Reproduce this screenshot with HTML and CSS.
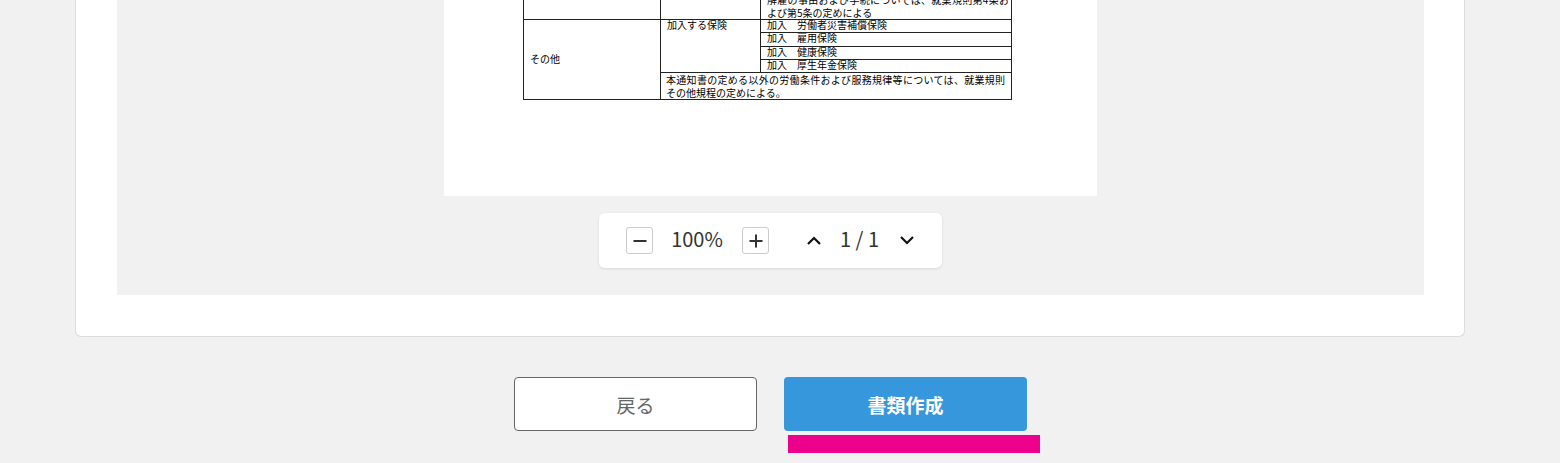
FILE: index.html
```html
<!DOCTYPE html>
<html lang="ja">
<head>
<meta charset="utf-8">
<title>書類作成</title>
<link rel="stylesheet" href="styles.css">
</head>
<body>
<main class="card">
  <section class="viewer">
    <div class="pdf-page">
      <table class="doc">
        <colgroup><col class="c1"><col class="c2"><col class="c3"></colgroup>
        <tr class="r-top">
          <td></td>
          <td class="tl">5 　解雇の事由</td>
          <td class="tl"><span class="spread">解雇の事由および手続については、就業規則第4条お</span><br>よび第5条の定めによる</td>
        </tr>
        <tr class="r-s">
          <td rowspan="5" class="other">その他</td>
          <td rowspan="4" class="tl">加入する保険</td>
          <td>加入　労働者災害補償保険</td>
        </tr>
        <tr class="r-s r-tall"><td>加入　雇用保険</td></tr>
        <tr class="r-s"><td>加入　健康保険</td></tr>
        <tr class="r-s"><td>加入　厚生年金保険</td></tr>
        <tr class="r-b"><td colspan="2"><span class="spread">本通知書の定める以外の労働条件および服務規律等については、就業規則</span><br>その他規程の定めによる。</td></tr>
      </table>
    </div>
    <div class="toolbar">
      <button class="zoom-btn" aria-label="縮小"><svg width="14" height="14" viewBox="0 0 14 14"><path d="M0.5 7H13.5" class="ico"/></svg></button>
      <span class="pct">100%</span>
      <button class="zoom-btn" aria-label="拡大"><svg width="14" height="14" viewBox="0 0 14 14"><path d="M0.5 7H13.5M7 0.5V13.5" class="ico"/></svg></button>
      <button class="nav up" aria-label="前へ"><svg width="14" height="9" viewBox="0 0 14 9"><path d="M1 8L7 2L13 8" class="chev"/></svg></button>
      <span class="pages">1 / 1</span>
      <button class="nav down" aria-label="次へ"><svg width="14" height="9" viewBox="0 0 14 9"><path d="M1 1L7 7L13 1" class="chev"/></svg></button>
    </div>
  </section>
</main>
<div class="actions">
  <button class="btn back">戻る</button>
  <div class="primary-wrap">
    <button class="btn primary">書類作成</button>
    <div class="mark"></div>
  </div>
</div>
</body>
</html>
```
FILE: styles.css
```css
* { box-sizing: border-box; }
html, body { margin: 0; height: 463px; overflow: hidden; }
body {
  background: #f1f1f1;
  font-family: "Noto Sans CJK JP", "Noto Sans", sans-serif;
  color: #333;
}
.card {
  width: 1390px;
  height: 337px;
  margin-left: 75px;
  padding: 0 40px 41px 41px;
  background: #fff;
  border: 1px solid #ddd;
  border-top: 0;
  border-radius: 0 0 6px 6px;
}
.viewer {
  height: 295px;
  background: #f1f1f1;
  display: flex;
  flex-direction: column;
  align-items: center;
}
.pdf-page {
  width: 653px;
  height: 196px;
  background: #fff;
  overflow: hidden;
  display: flex;
  flex-direction: column;
  justify-content: flex-end;
  align-items: center;
  padding-bottom: 96px;
  flex: none;
}
.doc {
  flex: none;
  width: 489px;
  margin-left: -6px;
  table-layout: fixed;
  border-collapse: collapse;
  font-family: "Noto Sans CJK JP", sans-serif;
  font-size: 10px;
  line-height: 13px;
  color: #000;
}
.c1 { width: 137px; }
.c2 { width: 100px; }
.doc td {
  border: 1px solid #222;
  padding: 0 5px 0 6px;
  vertical-align: top;
  white-space: nowrap;
}
.doc td[colspan] { padding-left: 5px; }
.doc .spread { letter-spacing: 0.3px; }
.doc .other { vertical-align: middle; line-height: 10px; padding-bottom: 2px; }
.r-top { height: 40px; }
.r-s td { height: 13px; line-height: 10px; }
.r-tall td { height: 14px; }
.r-b td { height: 27px; }
.r-top td:last-child { vertical-align: bottom; }
.toolbar {
  width: 343px;
  height: 55px;
  margin-top: 17px;
  background: #fff;
  border-radius: 6px;
  box-shadow: 0 1px 3px rgba(0, 0, 0, .1);
  display: flex;
  align-items: center;
  padding-left: 27px;
  flex: none;
}
.zoom-btn {
  width: 27px;
  height: 27px;
  padding: 0;
  background: #fff;
  border: 1px solid #ccc;
  border-radius: 3px;
  display: flex;
  align-items: center;
  justify-content: center;
  flex: none;
}
.ico { stroke: #333; stroke-width: 2; fill: none; }
.chev { stroke: #111; stroke-width: 2.2; fill: none; }
.pct {
  width: 89px;
  padding-right: 1px;
  padding-bottom: 4px;
  text-align: center;
  font-size: 20px;
  line-height: 27px;
  color: #333;
}
.pages {
  width: 75px;
  padding-bottom: 4px;
  text-align: center;
  font-size: 20px;
  line-height: 27px;
  color: #333;
}
.nav {
  width: 16px;
  height: 27px;
  padding: 0;
  background: none;
  border: 0;
  display: flex;
  align-items: center;
  justify-content: center;
  flex: none;
}
.nav.up { margin-left: 37px; }
.nav.down { margin-left: 2px; }
.actions {
  display: flex;
  justify-content: center;
  gap: 27px;
  margin-top: 40px;
  padding-right: 19px;
}
.btn {
  width: 243px;
  height: 54px;
  border-radius: 4px;
  font-family: inherit;
  font-size: 19px;
  padding: 0;
}
.back {
  background: #fff;
  border: 1px solid #666;
  color: #666;
}
.primary-wrap { width: 243px; }
.primary {
  display: block;
  background: #3797dc;
  border: 0;
  color: #fff;
  font-weight: 700;
}
.mark {
  width: 252px;
  height: 18px;
  margin: 4px 0 0 4px;
  background: #ec008c;
}
```
